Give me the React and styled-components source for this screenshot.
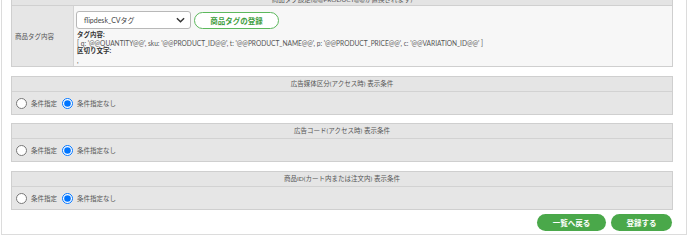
import React, { useState } from "react";
import styled, { createGlobalStyle } from "styled-components";

const GlobalStyle = createGlobalStyle`
  html, body {
    margin: 0;
    padding: 0;
    background: #fff;
  }
  body {
    font-family: Lato, "Noto Sans CJK JP", sans-serif;
    color: #555;
  }
`;

const Page = styled.div`
  width: 688px;
  height: 237px;
  overflow: hidden;
`;

// the page is scrolled a little, so the frame starts above the window
const Frame = styled.div`
  margin: -7px 1px 0 1px;
  border: 1px solid #dcdcdc;
  border-top: none;
  padding: 0 13px 0 9px;
  height: 242px;
  box-sizing: border-box;
  display: flex;
  flex-direction: column;
`;

const TagTable = styled.div`
  flex-shrink: 0;
  border: 1px solid #cfcfcf;
  border-top: none;
  display: grid;
  grid-template-columns: 62px 1fr;
  grid-template-rows: 13px 60px;
`;

const TableHead = styled.div`
  grid-column: 1 / 3;
  background: #e4e4e4;
  border-bottom: 1px solid #d0d0d0;
  font-size: 6.5px;
  line-height: 13px;
  text-align: center;
  color: #555;
`;

const LabelCell = styled.div`
  background: #e6e6e6;
  border-right: 1px solid #d4d4d4;
  display: flex;
  align-items: center;
  padding-left: 3px;
  font-size: 6.5px;
  color: #555;
`;

const ValueCell = styled.div`
  background: #f7f7f7;
  padding: 5px 3px 0 2px;
  display: flex;
  flex-direction: column;
`;

const ControlRow = styled.div`
  display: flex;
  align-items: center;
  gap: 3px;
  margin-bottom: 2px;
`;

const SelectBox = styled.div`
  width: 115px;
  height: 18px;
  box-sizing: border-box;
  border: 1px solid #b8b8b8;
  border-radius: 3px;
  background: #fff;
  display: flex;
  align-items: center;
  justify-content: space-between;
  padding: 0 5px 0 7px;
  font-size: 7px;
  color: #444;
`;

const OutlineButton = styled.button`
  height: 17px;
  width: 85px;
  border: 1px solid #5cb85c;
  border-radius: 9px;
  background: #fff;
  color: #3f9e3f;
  font-family: inherit;
  font-size: 7.5px;
  font-weight: 700;
  padding: 0;
`;

const InfoLabel = styled.div`
  font-size: 6.5px;
  font-weight: 700;
  color: #333;
  line-height: 8.2px;
  padding-left: 1px;
`;

const InfoText = styled.div`
  font-size: 6.6px;
  color: #555;
  line-height: 8.2px;
  white-space: nowrap;
  padding-left: 1px;
`;

const Section = styled.div`
  flex-shrink: 0;
  margin-top: ${(p) => p.$gap}px;
  border: 1px solid #cfcfcf;
  background: #e6e6e6;
`;

const SectionHead = styled.div`
  height: 14px;
  border-bottom: 1px solid #d2d2d2;
  background: #e5e5e5;
  font-size: 6.5px;
  line-height: 14px;
  text-align: center;
  color: #555;
`;

const SectionBody = styled.div`
  height: 22px;
  display: flex;
  align-items: center;
  padding-left: 4px;
`;

const RadioLabel = styled.label`
  display: flex;
  align-items: center;
  gap: 4px;
  margin-right: 5px;
  font-size: 6.5px;
  color: #555;
`;

const Radio = styled.input`
  width: 11px;
  height: 11px;
  margin: 0;
`;

const ButtonRow = styled.div`
  flex-shrink: 0;
  margin-top: 4px;
  display: flex;
  justify-content: flex-end;
  gap: 5px;
  padding-right: 1px;
`;

const GreenButton = styled.button`
  height: 17px;
  width: ${(p) => p.$w}px;
  border: none;
  border-radius: 9px;
  background: #4aa84a;
  color: #fff;
  font-family: inherit;
  font-size: 7.5px;
  font-weight: 700;
  padding: 0;
`;

const Chevron = () => (
  <svg width="9" height="6" viewBox="0 0 10 6">
    <path d="M1 1l4 4 4-4" fill="none" stroke="#333" strokeWidth="1.6" />
  </svg>
);

const conditions = [
  { key: "media", title: "広告媒体区分(アクセス時) 表示条件", gap: 9 },
  { key: "code", title: "広告コード(アクセス時) 表示条件", gap: 8 },
  { key: "item", title: "商品ID(カート内または注文内) 表示条件", gap: 9 },
];

function ConditionSection({ name, title, gap }) {
  const [value, setValue] = useState("none");
  return (
    <Section $gap={gap}>
      <SectionHead>{title}</SectionHead>
      <SectionBody>
        <RadioLabel>
          <Radio
            type="radio"
            name={name}
            checked={value === "set"}
            onChange={() => setValue("set")}
          />
          条件指定
        </RadioLabel>
        <RadioLabel>
          <Radio
            type="radio"
            name={name}
            checked={value === "none"}
            onChange={() => setValue("none")}
          />
          条件指定なし
        </RadioLabel>
      </SectionBody>
    </Section>
  );
}

export default function App() {
  return (
    <Page>
      <GlobalStyle />
      <Frame>
        <TagTable>
          <TableHead>商品タグ設定(@@PRODUCT@@が置換されます)</TableHead>
          <LabelCell>商品タグ内容</LabelCell>
          <ValueCell>
            <ControlRow>
              <SelectBox>
                <span>flipdesk_CVタグ</span>
                <Chevron />
              </SelectBox>
              <OutlineButton>商品タグの登録</OutlineButton>
            </ControlRow>
            <InfoLabel>タグ内容:</InfoLabel>
            <InfoText>
              [ q: '@@QUANTITY@@', sku: '@@PRODUCT_ID@@', t: '@@PRODUCT_NAME@@', p:
              '@@PRODUCT_PRICE@@', c: '@@VARIATION_ID@@' ]
            </InfoText>
            <InfoLabel>区切り文字:</InfoLabel>
            <InfoText>,</InfoText>
          </ValueCell>
        </TagTable>

        {conditions.map((c) => (
          <ConditionSection key={c.key} name={c.key} title={c.title} gap={c.gap} />
        ))}

        <ButtonRow>
          <GreenButton $w={69}>一覧へ戻る</GreenButton>
          <GreenButton $w={61}>登録する</GreenButton>
        </ButtonRow>
      </Frame>
    </Page>
  );
}
